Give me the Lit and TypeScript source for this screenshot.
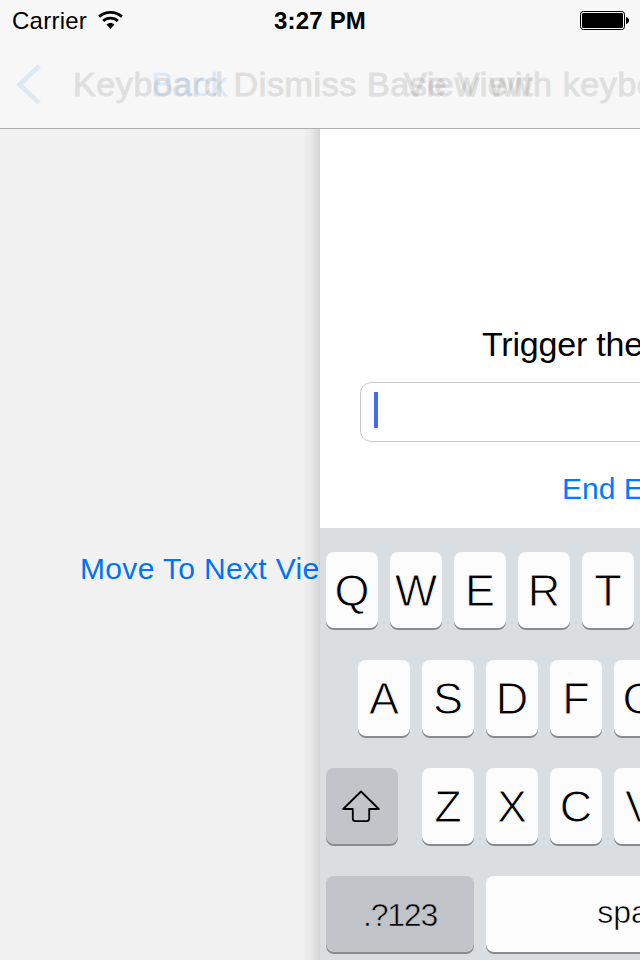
import { LitElement, html, css } from "lit";
import { customElement, property } from "lit/decorators.js";

@customElement("status-bar")
class StatusBar extends LitElement {
  static styles = css`
    :host {
      display: grid;
      grid-template-columns: 1fr auto 1fr;
      height: 40px;
      line-height: 41px;
      font-size: 24px;
      color: #000;
    }
    .left {
      display: flex;
      padding-left: 12px;
      letter-spacing: 0.25px;
    }
    .wifi {
      margin: 10px 0 0 10px;
    }
    .time {
      font-weight: bold;
      letter-spacing: 0.2px;
    }
    .right {
      display: flex;
      justify-content: flex-end;
      padding: 11px 11px 0 0;
    }
    svg {
      display: block;
    }
  `;
  render() {
    return html`
      <div class="left">
        <span>Carrier</span>
        <svg class="wifi" width="27" height="20" viewBox="0 0 27 20">
          <g fill="none" stroke="#000" stroke-width="2.9">
            <path d="M2.1 6.6C8.4 .9 18.6 .9 24.9 6.6" />
            <path d="M6.2 11C10.3 7.2 16.7 7.2 20.8 11" />
          </g>
          <path d="M9.5 14.6C11.8 12.6 15.2 12.6 17.5 14.6L13.5 19Z" />
        </svg>
      </div>
      <div class="time">3:27 PM</div>
      <div class="right">
        <svg width="49" height="19" viewBox="0 0 49 19">
          <rect x=".5" y=".5" width="44" height="18" rx="2.8" fill="none" stroke="#000" />
          <rect x="2" y="2" width="41" height="15" rx="1.3" />
          <path d="M46 6C50 6.4 50 12.6 46 13Z" />
        </svg>
      </div>
    `;
  }
}

@customElement("nav-titles")
class NavTitles extends LitElement {
  static styles = css`
    :host {
      display: block;
      position: relative;
      height: 88px;
      overflow: hidden;
      font-size: 34px;
      line-height: 88px;
      white-space: nowrap;
    }
    .layer {
      position: absolute;
      top: 0;
    }
    .chevron {
      left: 16px;
      top: 23px;
      opacity: 0.1;
    }
    .back {
      left: 151px;
      color: #007aff;
      opacity: 0.11;
      letter-spacing: 0.2px;
      -webkit-text-stroke: 0.3px #007aff;
    }
    .title {
      color: #000;
      opacity: 0.09;
      letter-spacing: 0.62px;
      -webkit-text-stroke: 1.1px #000;
    }
    .outgoing {
      left: 73px;
    }
    .incoming {
      left: 404px;
    }
  `;
  render() {
    return html`
      <svg class="layer chevron" width="27" height="44" viewBox="0 0 27 44">
        <path d="M23.2 3L3.6 21.5L23.2 40" fill="none" stroke="#007aff" stroke-width="5" />
      </svg>
      <span class="layer title outgoing">Keyboard Dismiss Base View</span>
      <span class="layer back">Back</span>
      <span class="layer title incoming">View with keyboard</span>
    `;
  }
}

@customElement("key-cap")
class KeyCap extends LitElement {
  @property() kind = "letter";
  static styles = css`
    :host {
      display: block;
      box-sizing: border-box;
      flex: none;
      width: 52px;
      height: 76px;
      border-radius: 8px;
      background: #fcfcfc;
      box-shadow: 0 2px 0 #888b8e;
      text-align: center;
      font-size: 45px;
      line-height: 77px;
      -webkit-text-stroke: 0.9px #fcfcfc;
    }
    :host([kind="shift"]) {
      width: 72px;
      background: #c1c4c8;
    }
    :host([kind="mode"]) {
      width: 148px;
      background: #c1c4c8;
      font-size: 32px;
      line-height: 78px;
      letter-spacing: -1.2px;
      -webkit-text-stroke: 0.6px #c1c4c8;
    }
    :host([kind="space"]) {
      width: 308px;
      font-size: 32px;
      line-height: 72px;
      -webkit-text-stroke: 0.5px #fcfcfc;
    }
  `;
  render() {
    return html`<slot></slot>`;
  }
}

@customElement("ios-keyboard")
class IosKeyboard extends LitElement {
  static styles = css`
    :host {
      display: flex;
      flex-direction: column;
      gap: 32px;
      height: 432px;
      box-sizing: border-box;
      padding: 24px 0 0 6px;
      background: #dadee1;
      color: #000;
      overflow: hidden;
    }
    .row {
      display: flex;
      gap: 12px;
    }
    .home {
      padding-left: 32px;
    }
    .shift {
      margin-right: 12px;
    }
    .arrow {
      display: block;
      margin: 22px auto 0 16px;
    }
  `;
  private keys(letters: string) {
    return [...letters].map((l) => html`<key-cap>${l}</key-cap>`);
  }
  render() {
    return html`
      <div class="row">${this.keys("QWERTYUIOP")}</div>
      <div class="row home">${this.keys("ASDFGHJKL")}</div>
      <div class="row">
        <key-cap class="shift" kind="shift">
          <svg class="arrow" width="39" height="33" viewBox="0 0 39 33">
            <path
              d="M19 1.5L36.8 19H27.2V28.5Q27.2 31.1 24.6 31.1H13.4Q10.8 31.1 10.8 28.5V19H1.2Z"
              fill="none"
              stroke="#000"
              stroke-width="1.8"
              stroke-linejoin="round"
            />
          </svg>
        </key-cap>
        ${this.keys("ZXCVBNM")}
      </div>
      <div class="row">
        <key-cap kind="mode">.?123</key-cap>
        <key-cap kind="space">space</key-cap>
      </div>
    `;
  }
}

@customElement("app-root")
class AppRoot extends LitElement {
  static styles = css`
    :host {
      display: flex;
      flex-direction: column;
      width: 640px;
      height: 960px;
      overflow: hidden;
      font-family: "Liberation Sans", Arial, sans-serif;
      background: #fff;
    }
    .header {
      flex: none;
      background: #f7f7f7;
      border-bottom: 1px solid #adadad;
    }
    .views {
      flex: 1;
      display: grid;
      grid-template-columns: 320px 320px;
      min-height: 0;
    }
    .base {
      position: relative;
      overflow: hidden;
      background: #f1f1f1;
      padding: 420px 0 0 80px;
      white-space: nowrap;
    }
    .edge {
      position: absolute;
      top: 0;
      bottom: 0;
      right: 0;
      width: 18px;
      background: linear-gradient(
        to right,
        rgba(0, 0, 0, 0),
        rgba(0, 0, 0, 0.03) 45%,
        rgba(0, 0, 0, 0.12)
      );
    }
    .link {
      font-size: 30px;
      line-height: 40px;
      color: #007aff;
      letter-spacing: 0.35px;
    }
    .base .link {
      color: #0074f2;
    }
    .next {
      display: flex;
      flex-direction: column;
      overflow: hidden;
      background: #fff;
      white-space: nowrap;
    }
    .label {
      margin: 195px 0 0 162px;
      font-size: 34px;
      line-height: 40px;
      letter-spacing: -0.2px;
      color: #000;
    }
    .field {
      flex: none;
      box-sizing: border-box;
      width: 560px;
      height: 60px;
      margin: 18px 0 26px 40px;
      padding: 9px 13px;
      border: 1px solid #c8c8c8;
      border-radius: 11px;
    }
    .caret {
      width: 4px;
      height: 36px;
      background: #426bf2;
    }
    .end {
      margin: 0 0 19px 242px;
      line-height: 41px;
      letter-spacing: 0;
    }
  `;
  render() {
    return html`
      <div class="header">
        <status-bar></status-bar>
        <nav-titles></nav-titles>
      </div>
      <div class="views">
        <div class="base">
          <div class="link">Move To Next View</div>
          <div class="edge"></div>
        </div>
        <div class="next">
          <div class="label">Trigger the keyboard</div>
          <div class="field"><div class="caret"></div></div>
          <div class="link end">End Editing</div>
          <ios-keyboard></ios-keyboard>
        </div>
      </div>
    `;
  }
}
